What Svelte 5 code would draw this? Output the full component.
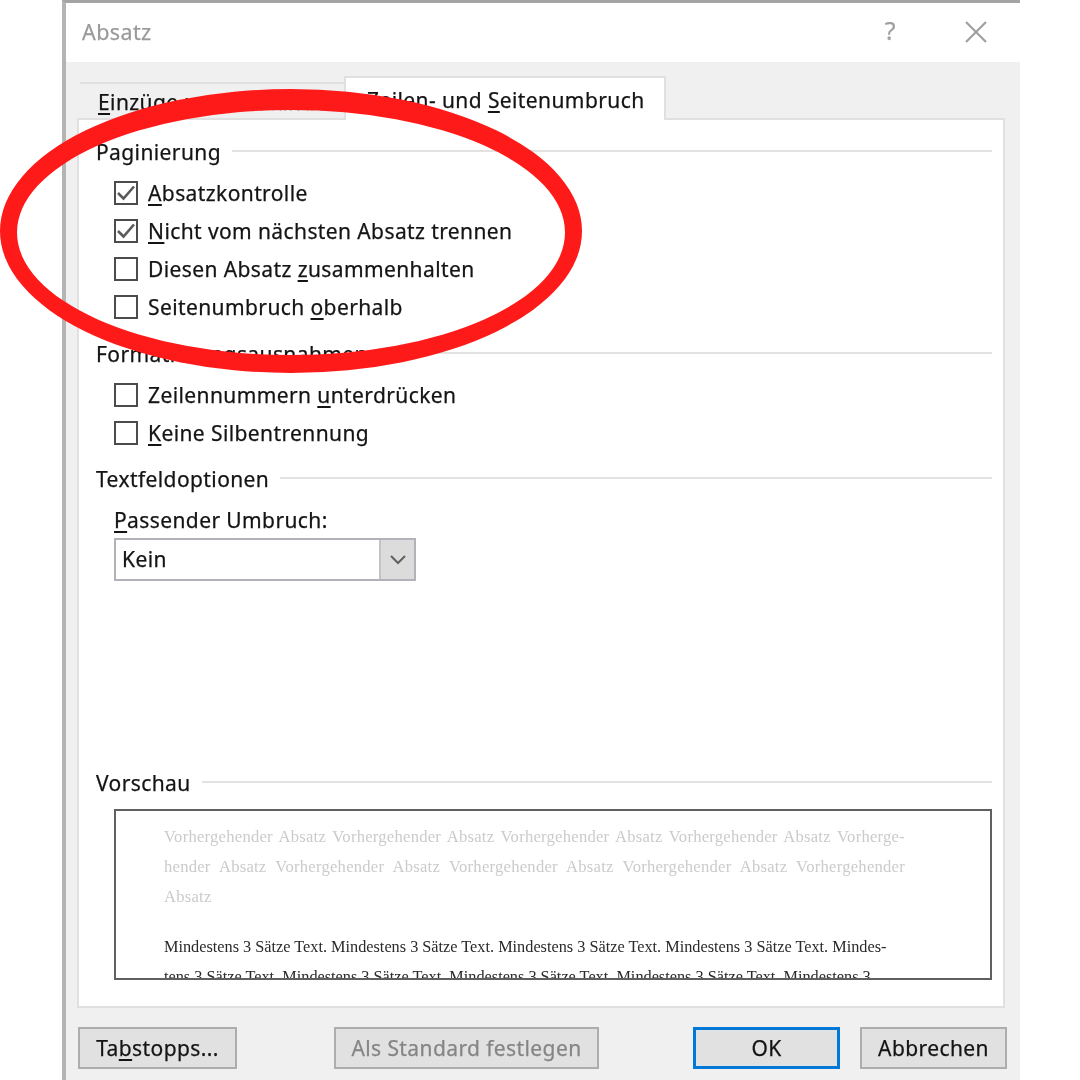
<script>
  const pagination = [
    { pre: '', key: 'A', post: 'bsatzkontrolle', checked: true },
    { pre: '', key: 'N', post: 'icht vom nächsten Absatz trennen', checked: true },
    { pre: 'Diesen Absatz ', key: 'z', post: 'usammenhalten', checked: false },
    { pre: 'Seitenumbruch ', key: 'o', post: 'berhalb', checked: false }
  ];
  const exceptions = [
    { pre: 'Zeilennummern ', key: 'u', post: 'nterdrücken', checked: false },
    { pre: '', key: 'K', post: 'eine Silbentrennung', checked: false }
  ];
  // preview text is broken by hand, like the Word dialog does it
  const previewLines = [
    { text: 'Vorhergehender Absatz Vorhergehender Absatz Vorhergehender Absatz Vorhergehender Absatz Vorherge-', kind: 'prev fit' },
    { text: 'hender Absatz Vorhergehender Absatz Vorhergehender Absatz Vorhergehender Absatz Vorhergehender', kind: 'prev fit' },
    { text: 'Absatz', kind: 'prev' },
    { text: '', kind: 'gap' },
    { text: 'Mindestens 3 Sätze Text. Mindestens 3 Sätze Text. Mindestens 3 Sätze Text. Mindestens 3 Sätze Text. Mindes-', kind: 'cur' },
    { text: 'tens 3 Sätze Text. Mindestens 3 Sätze Text. Mindestens 3 Sätze Text. Mindestens 3 Sätze Text. Mindestens 3', kind: 'cur' }
  ];
</script>

{#snippet checkRow(row)}
  <div class="row">
    <span class="box">
      {#if row.checked}
        <svg width="20" height="20" viewBox="0 0 20 20">
          <path d="M2 10 L7.5 15.5 L18 3.5" fill="none" stroke="#5a5a5a" stroke-width="2.6" />
        </svg>
      {/if}
    </span>
    <span class="label">{row.pre}<u>{row.key}</u>{row.post}</span>
  </div>
{/snippet}

<div class="page">
  <div class="dialog">
    <header class="titlebar">
      <span class="title">Absatz</span>
      <span class="help">?</span>
      <svg class="close" width="22" height="22" viewBox="0 0 22 22">
        <path d="M1 1 L21 21 M21 1 L1 21" stroke="#9c9c9c" stroke-width="2" fill="none" />
      </svg>
    </header>

    <div class="body">
      <div class="tabs">
        <div class="tab"><u>E</u>inzüge und Abstände</div>
        <div class="tab active">Zeilen- und <u>S</u>eitenumbruch</div>
      </div>

      <div class="panel">
        <div class="heading first"><span>Paginierung</span></div>
        <div class="rows">
          {#each pagination as row}
            {@render checkRow(row)}
          {/each}
        </div>

        <div class="heading second"><span>Formatierungsausnahmen</span></div>
        <div class="rows">
          {#each exceptions as row}
            {@render checkRow(row)}
          {/each}
        </div>

        <div class="heading third"><span>Textfeldoptionen</span></div>
        <div class="field-label"><u>P</u>assender Umbruch:</div>
        <div class="select">
          <span class="value">Kein</span>
          <span class="arrow">
            <svg width="16" height="10" viewBox="0 0 16 10">
              <path d="M1 1 L8 8 L15 1" fill="none" stroke="#606060" stroke-width="2" />
            </svg>
          </span>
        </div>

        <div class="heading fourth"><span>Vorschau</span></div>
        <div class="preview">
          {#each previewLines as line}
            <div class="pline {line.kind}">{line.text}</div>
          {/each}
        </div>
      </div>

      <div class="buttons">
        <button class="tabstops">Ta<u>b</u>stopps...</button>
        <button class="standard" disabled>Als Standard festlegen</button>
        <button class="ok">OK</button>
        <button class="cancel">Abbrechen</button>
      </div>
    </div>
  </div>

  <svg class="circle" width="590" height="300" viewBox="0 0 590 300">
    <path
      fill="#ff1a1a"
      fill-rule="evenodd"
      d="M0 142 A291 142 0 1 1 582 142 A291 142 0 1 1 0 142 Z M17 143.5 A274 122.5 0 1 0 565 143.5 A274 122.5 0 1 0 17 143.5 Z"
    />
  </svg>
</div>

<style>
  :global(body) {
    margin: 0;
    background: #fff;
  }

  .page {
    position: relative;
    width: 1080px;
    height: 1080px;
    overflow: hidden;
    padding-left: 62px;
    box-sizing: border-box;
    font-family: 'Noto Sans', 'Open Sans', sans-serif;
    font-size: 21px;
    letter-spacing: 0.4px;
    -webkit-text-stroke: 0.25px currentColor;
    color: #141414;
  }

  .dialog {
    width: 958px;
    height: 1080px;
    box-sizing: border-box;
    border-left: 4px solid #b4b4b4;
    border-top: 3px solid #a4a4a4;
    display: flex;
    flex-direction: column;
    filter: blur(0.5px);
  }

  u {
    text-decoration-thickness: 2px;
    text-underline-offset: 3px;
  }

  .titlebar {
    height: 59px;
    flex: none;
    display: flex;
    align-items: center;
    padding: 0 33px 2px 16px;
    box-sizing: border-box;
    background: #fff;
  }

  .title {
    color: #999;
    font-size: 21.5px;
    flex: 1;
  }

  .help {
    color: #a0a0a0;
    font-size: 25px;
    margin-right: 69px;
    margin-top: -4px;
  }

  .body {
    flex: 1;
    display: flex;
    flex-direction: column;
    background: #f0f0f0;
    padding: 14px 15px 0 11px;
    min-height: 0;
  }

  .tabs {
    display: flex;
    align-items: flex-end;
    height: 44px;
    flex: none;
    margin-bottom: -2px;
    padding-left: 3px;
    position: relative;
    z-index: 1;
  }

  .tab {
    width: 264px;
    height: 38px;
    box-sizing: border-box;
    padding-left: 18px;
    line-height: 36px;
    border-top: 2px solid #e0e0e0;
    white-space: nowrap;
    overflow: hidden;
  }

  .tab.active {
    width: 322px;
    height: 44px;
    padding-left: 21px;
    line-height: 44px;
    background: #fff;
    border: 2px solid #e0e0e0;
    border-bottom: none;
  }

  .panel {
    height: 890px;
    flex: none;
    box-sizing: border-box;
    background: #fff;
    border: 2px solid #e0e0e0;
    padding: 0 11px 26px 17px;
    display: flex;
    flex-direction: column;
  }

  .heading {
    display: flex;
    align-items: center;
    gap: 11px;
    height: 28px;
    line-height: 28px;
    white-space: nowrap;
  }

  .heading::after {
    content: '';
    flex: 1;
    height: 2px;
    margin-top: -2px;
    background: #e2e2e2;
  }

  .heading.first {
    margin-top: 18px;
  }

  .heading.second {
    margin-top: 14px;
  }

  .heading.third {
    margin-top: 13px;
  }

  .heading.fourth {
    margin-top: auto;
  }

  .rows {
    margin-top: 8px;
    padding-left: 18px;
  }

  .row {
    height: 38px;
    display: flex;
    align-items: center;
    gap: 10px;
  }

  .box {
    width: 24px;
    height: 24px;
    box-sizing: border-box;
    border: 2px solid #4c4c4c;
    background: #fff;
    flex: none;
  }

  .box svg {
    display: block;
  }

  .field-label {
    margin: 13px 0 4px 18px;
    height: 28px;
    line-height: 28px;
  }

  .select {
    margin-left: 18px;
    width: 302px;
    height: 43px;
    box-sizing: border-box;
    border: 2px solid #b2b2b8;
    display: flex;
    align-items: stretch;
  }

  .value {
    flex: 1;
    padding-left: 6px;
    line-height: 38px;
  }

  .arrow {
    width: 33px;
    background: #dcdcdc;
    border-left: 2px solid #c4c4c8;
    display: flex;
    align-items: center;
    justify-content: center;
  }

  .preview {
    margin: 12px 0 0 18px;
    height: 171px;
    box-sizing: border-box;
    border: 2px solid #606060;
    padding: 11px 85px 0 48px;
    overflow: hidden;
    font-family: 'Liberation Serif', serif;
    font-size: 16.27px;
    letter-spacing: 0;
    -webkit-text-stroke: 0;
  }

  .pline {
    height: 30px;
    line-height: 30px;
    white-space: nowrap;
  }

  .pline.gap {
    height: 20px;
  }

  .pline.prev {
    color: #cbcbcb;
    font-size: 16.6px;
    letter-spacing: 0.25px;
  }

  .pline.fit {
    white-space: normal;
    text-align: justify;
    text-align-last: justify;
  }

  .pline.cur {
    color: #2a2a2a;
  }

  .buttons {
    display: flex;
    margin-top: 19px;
    gap: 20px;
  }

  button {
    flex: none;
    height: 42px;
    box-sizing: border-box;
    border: 2px solid #adadad;
    background: #e1e1e1;
    font: inherit;
    letter-spacing: inherit;
    color: inherit;
    padding: 0;
  }

  .tabstops {
    width: 159px;
    margin-left: 1px;
    margin-right: 77px;
  }

  .standard {
    width: 265px;
    color: #858585;
    margin-right: 74px;
  }

  .ok {
    width: 147px;
    border: 3px solid #0078d7;
  }

  .cancel {
    width: 147px;
  }

  .circle {
    position: absolute;
    left: 0;
    top: 89px;
  }
</style>
